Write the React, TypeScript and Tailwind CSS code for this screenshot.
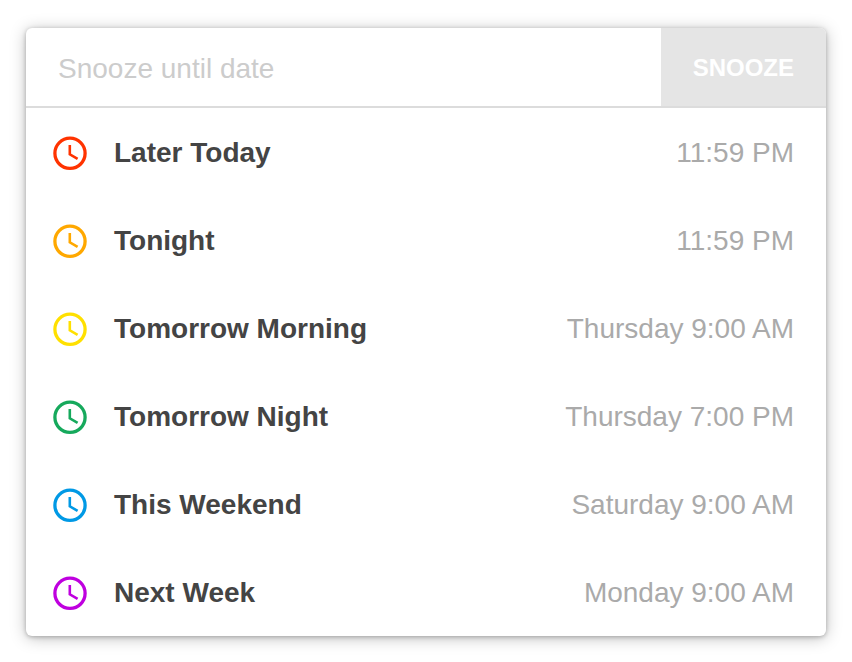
import React from "react";

type SnoozeOption = { label: string; time: string; color: string };

const options: SnoozeOption[] = [
  { label: "Later Today", time: "11:59 PM", color: "text-[#ff3300]" },
  { label: "Tonight", time: "11:59 PM", color: "text-[#ffa800]" },
  { label: "Tomorrow Morning", time: "Thursday 9:00 AM", color: "text-[#ffe000]" },
  { label: "Tomorrow Night", time: "Thursday 7:00 PM", color: "text-[#16a95c]" },
  { label: "This Weekend", time: "Saturday 9:00 AM", color: "text-[#0099e5]" },
  { label: "Next Week", time: "Monday 9:00 AM", color: "text-[#bf00df]" },
];

function ClockIcon({ className }: { className: string }) {
  return (
    <svg viewBox="0 0 40 40" className={`size-10 shrink-0 ${className}`} fill="none" stroke="currentColor" aria-hidden="true">
      <circle cx="20" cy="20.3" r="15.1" strokeWidth="3.3" />
      <path d="M19.8 12v9.3l7.8 4.6" strokeWidth="2.6" />
    </svg>
  );
}

export default function App() {
  return (
    <main className="bg-white px-[26px] py-7 font-['Helvetica_Neue',Helvetica,'Liberation_Sans',Arial,sans-serif]">
      <section className="overflow-hidden rounded-md bg-white shadow-[0_2px_16px_rgba(0,0,0,0.25),0_1px_4px_rgba(0,0,0,0.25)]">
        <form className="flex h-20 border-b-2 border-[#dcdcdc]" onSubmit={(e) => e.preventDefault()}>
          <input
            type="text"
            aria-label="Snooze until date"
            placeholder="Snooze until date"
            className="min-w-0 flex-1 px-8 pt-1 text-[28px] text-[#444444] outline-none placeholder:text-[#cccccc]"
          />
          <button type="submit" className="bg-[#e5e5e5] px-8 pt-0.5 text-2xl font-bold text-white">
            SNOOZE
          </button>
        </form>
        <ul>
          {options.map(({ label, time, color }) => (
            <li key={label}>
              <button type="button" className="flex h-22 w-full items-center gap-6 pt-0.5 pr-8 pl-6 text-[28px]">
                <ClockIcon className={color} />
                <span className="font-bold text-[#444444]">{label}</span>
                <span className="ml-auto text-[#aaaaaa]">{time}</span>
              </button>
            </li>
          ))}
        </ul>
      </section>
    </main>
  );
}
